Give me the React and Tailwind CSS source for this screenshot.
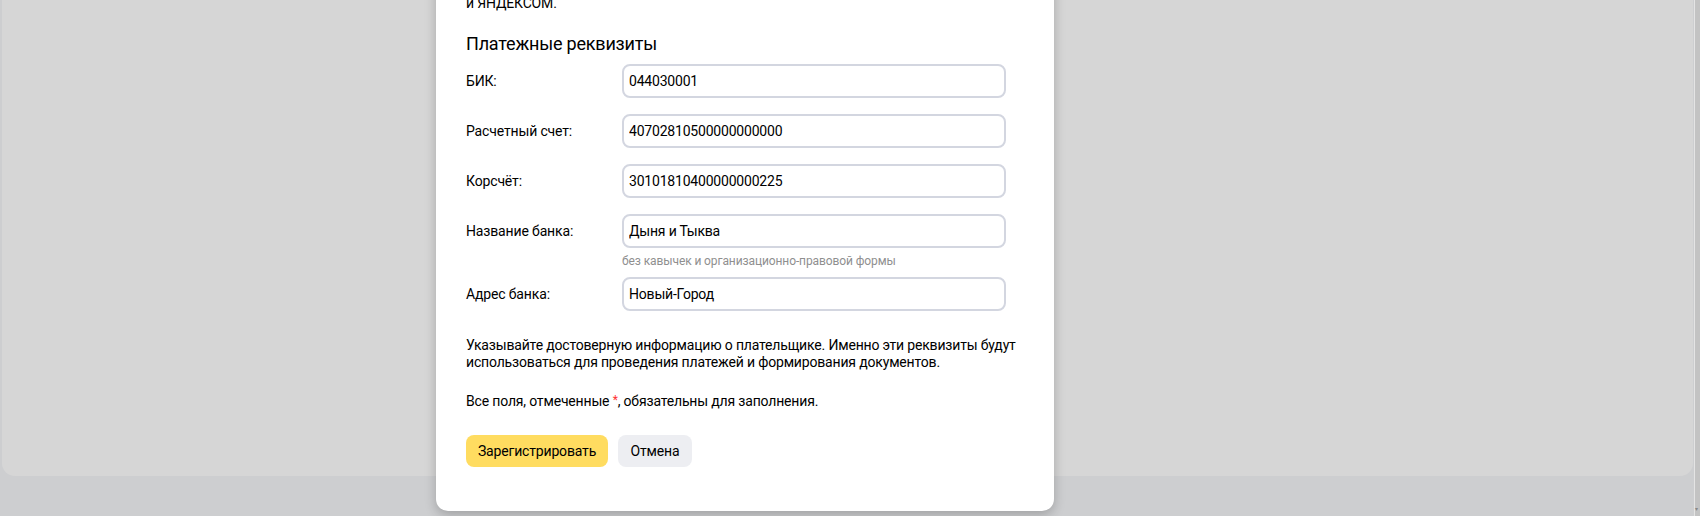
const font = { fontFamily: 'Roboto, "Noto Sans", sans-serif' };

const fields = [
  { label: 'БИК:', value: '044030001' },
  { label: 'Расчетный счет:', value: '40702810500000000000' },
  { label: 'Корсчёт:', value: '30101810400000000225' },
  { label: 'Название банка:', value: 'Дыня и Тыква', hint: 'без кавычек и организационно-правовой формы' },
  { label: 'Адрес банка:', value: 'Новый-Город' },
];

const Field = ({ label, value, hint }) => (
  <div className="flex flex-col">
    <div className="flex items-center">
      <label className="w-[156px] shrink-0 text-[14px] leading-[17px] tracking-[-0.15px] text-[#000]">{label}</label>
      <input
        readOnly
        value={value}
        className="w-[384px] h-[34px] px-[5px] rounded-[8px] border-2 border-[#d3d6e0] bg-white text-[14px] tracking-[-0.2px] text-[#000] outline-none"
        style={font}
      />
    </div>
    {hint && (
      <div className="ml-[156px] mt-[5px] text-[12px] leading-[16px] tracking-[-0.1px] text-[#8f8f8f]">{hint}</div>
    )}
  </div>
);

const App = () => {
  return (
    <div className="relative h-[516px] w-full overflow-hidden bg-[#cdced0]" style={font}>
      <div className="flex h-[516px]">
        <div className="flex-1 h-[476px] ml-[2px] mr-[1px] rounded-b-[13px] bg-[#d6d6d6]" />
        <div className="w-[1px] h-full bg-[#e4e4e4]" />
        <div className="relative w-[5px] h-full bg-[#c3c3c3]">
          <span className="absolute bottom-[4px] left-0 text-[6px] leading-none text-[#888]">▾</span>
        </div>
      </div>

      <div className="absolute left-[436px] top-[-40px] w-[618px] rounded-[12px] bg-white pt-[35px] pb-[44px] px-[30px] shadow-[0_4px_12px_rgba(0,0,0,0.22)]">
        <p className="text-[14px] leading-[17px] tracking-[-0.17px] text-[#000]">и ЯНДЕКСОМ.</p>

        <h2 className="mt-[20px] text-[18px] leading-[24px] tracking-[-0.2px] text-[#000]">Платежные реквизиты</h2>

        <div className="mt-[8px] flex flex-col gap-[16px]">
          {fields.slice(0, 3).map((f) => (
            <Field key={f.label} {...f} />
          ))}
        </div>
        <div className="mt-[16px]">
          <Field {...fields[3]} />
        </div>
        <div className="mt-[8px]">
          <Field {...fields[4]} />
        </div>

        <p className="mt-[26px] whitespace-nowrap text-[14px] leading-[17px] tracking-[-0.17px] text-[#000]">
          Указывайте достоверную информацию о плательщике. Именно эти реквизиты будут
          <br />
          использоваться для проведения платежей и формирования документов.
        </p>

        <p className="mt-[22px] whitespace-nowrap text-[14px] leading-[17px] tracking-[-0.17px] text-[#000]">
          Все поля, отмеченные <span className="relative top-[-2px] text-[12px] text-[#f33]">*</span>, обязательны для заполнения.
        </p>

        <div className="mt-[24px] flex gap-[10px]">
          <button className="h-[32px] w-[142px] rounded-[8px] bg-[#ffdc60] text-[14px] tracking-[-0.17px] text-[#000]">
            Зарегистрировать
          </button>
          <button className="h-[32px] w-[74px] rounded-[8px] bg-[#edeef2] text-[14px] tracking-[-0.17px] text-[#000]">
            Отмена
          </button>
        </div>
      </div>
    </div>
  );
};

export default App;
